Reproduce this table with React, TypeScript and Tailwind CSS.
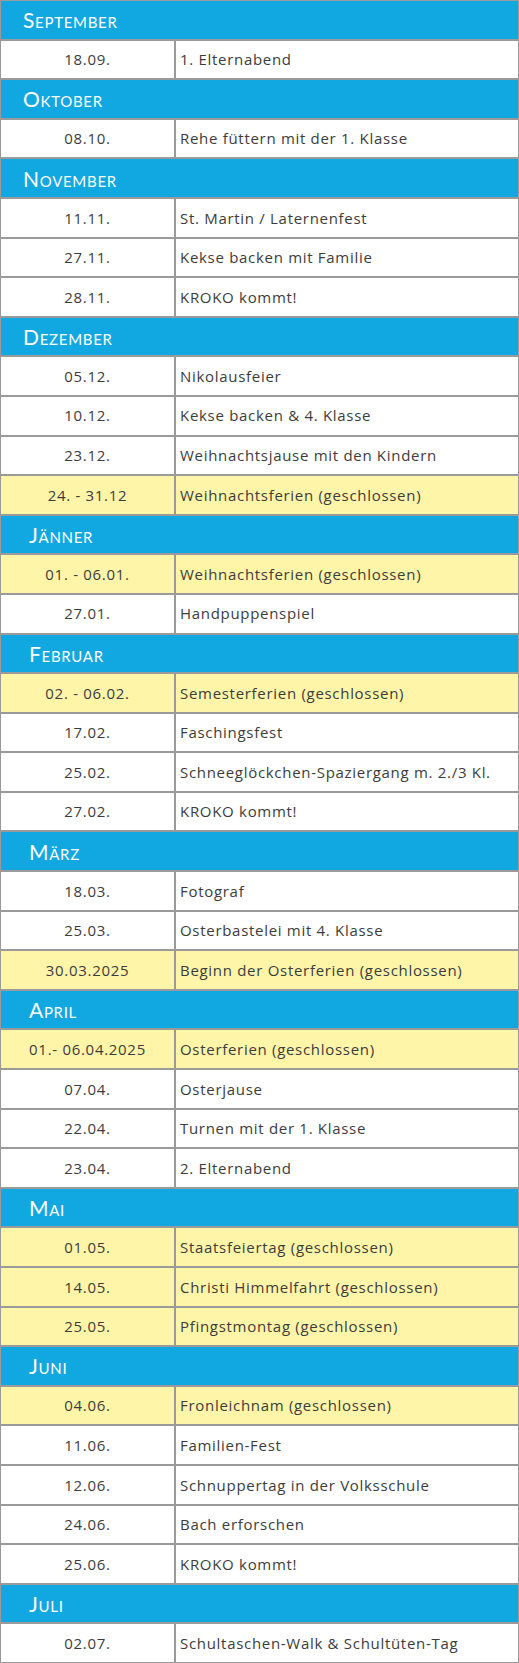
type Entry = { date: string; text: string; closed?: boolean };
type Month = { name: string; indent: 'sm' | 'lg'; entries: Entry[] };

const MONTHS: Month[] = [
  { name: 'September', indent: 'sm', entries: [{ date: '18.09.', text: '1. Elternabend' }] },
  { name: 'Oktober', indent: 'sm', entries: [{ date: '08.10.', text: 'Rehe füttern mit der 1. Klasse' }] },
  {
    name: 'November',
    indent: 'sm',
    entries: [
      { date: '11.11.', text: 'St. Martin / Laternenfest' },
      { date: '27.11.', text: 'Kekse backen mit Familie' },
      { date: '28.11.', text: 'KROKO kommt!' },
    ],
  },
  {
    name: 'Dezember',
    indent: 'sm',
    entries: [
      { date: '05.12.', text: 'Nikolausfeier' },
      { date: '10.12.', text: 'Kekse backen & 4. Klasse' },
      { date: '23.12.', text: 'Weihnachtsjause mit den Kindern' },
      { date: '24. - 31.12', text: 'Weihnachtsferien (geschlossen)', closed: true },
    ],
  },
  {
    name: 'Jänner',
    indent: 'lg',
    entries: [
      { date: '01. - 06.01.', text: 'Weihnachtsferien (geschlossen)', closed: true },
      { date: '27.01.', text: 'Handpuppenspiel' },
    ],
  },
  {
    name: 'Februar',
    indent: 'lg',
    entries: [
      { date: '02. - 06.02.', text: 'Semesterferien (geschlossen)', closed: true },
      { date: '17.02.', text: 'Faschingsfest' },
      { date: '25.02.', text: 'Schneeglöckchen-Spaziergang m. 2./3 Kl.' },
      { date: '27.02.', text: 'KROKO kommt!' },
    ],
  },
  {
    name: 'März',
    indent: 'lg',
    entries: [
      { date: '18.03.', text: 'Fotograf' },
      { date: '25.03.', text: 'Osterbastelei mit 4. Klasse' },
      { date: '30.03.2025', text: 'Beginn der Osterferien (geschlossen)', closed: true },
    ],
  },
  {
    name: 'April',
    indent: 'lg',
    entries: [
      { date: '01.- 06.04.2025', text: 'Osterferien (geschlossen)', closed: true },
      { date: '07.04.', text: 'Osterjause' },
      { date: '22.04.', text: 'Turnen mit der 1. Klasse' },
      { date: '23.04.', text: '2. Elternabend' },
    ],
  },
  {
    name: 'Mai',
    indent: 'lg',
    entries: [
      { date: '01.05.', text: 'Staatsfeiertag (geschlossen)', closed: true },
      { date: '14.05.', text: 'Christi Himmelfahrt (geschlossen)', closed: true },
      { date: '25.05.', text: 'Pfingstmontag (geschlossen)', closed: true },
    ],
  },
  {
    name: 'Juni',
    indent: 'lg',
    entries: [
      { date: '04.06.', text: 'Fronleichnam (geschlossen)', closed: true },
      { date: '11.06.', text: 'Familien-Fest' },
      { date: '12.06.', text: 'Schnuppertag in der Volksschule' },
      { date: '24.06.', text: 'Bach erforschen' },
      { date: '25.06.', text: 'KROKO kommt!' },
    ],
  },
  { name: 'Juli', indent: 'lg', entries: [{ date: '02.07.', text: 'Schultaschen-Walk & Schultüten-Tag' }] },
];

function MonthHeader({ name, indent }: { name: string; indent: 'sm' | 'lg' }) {
  return (
    <div className="flex h-[39.6px] items-center border border-[#9a9a9a] bg-[#11a8e1]">
      <span
        className={`${indent === 'sm' ? 'pl-[22px]' : 'pl-[28px]'} text-[21px] leading-none tracking-[0.7px] text-white [font-variant:small-caps] font-['Lato',sans-serif]`}
      >
        {name}
      </span>
    </div>
  );
}

function EntryRow({ entry }: { entry: Entry }) {
  const bg = entry.closed ? 'bg-[#fff5a8]' : 'bg-white';
  return (
    <div className="flex h-[39.6px] text-[15px] tracking-[0.7px] text-[#3c3c3c]">
      {/* date column */}
      <div className={`flex w-[175px] items-center justify-center border border-[#9a9a9a] ${bg}`}>
        {entry.date}
      </div>
      {/* description column */}
      <div className={`flex flex-1 items-center border border-[#9a9a9a] pl-[4px] ${bg}`}>
        {entry.text}
      </div>
    </div>
  );
}

export default function App() {
  return (
    <div className="w-[519px] bg-white font-['Open_Sans',sans-serif]">
      {MONTHS.map((month) => (
        <div key={month.name}>
          <MonthHeader name={month.name} indent={month.indent} />
          {month.entries.map((entry) => (
            <EntryRow key={month.name + entry.date} entry={entry} />
          ))}
        </div>
      ))}
    </div>
  );
}
